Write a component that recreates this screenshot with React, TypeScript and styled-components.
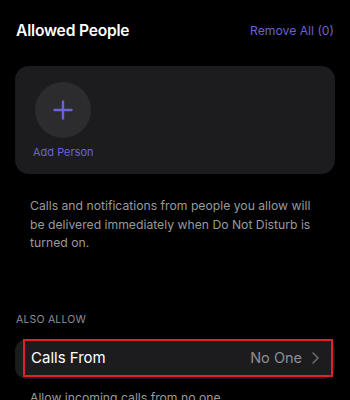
import React from 'react';
import styled, { createGlobalStyle } from 'styled-components';

const GlobalStyle = createGlobalStyle`
  html, body {
    margin: 0;
    padding: 0;
    background: #000000;
  }
  body {
    font-family: Inter, "Liberation Sans", sans-serif;
    -webkit-font-smoothing: antialiased;
  }
`;

const Screen = styled.div`
  width: 350px;
  height: 400px;
  overflow: hidden;
  background: #000000;
  color: #ffffff;
  box-sizing: border-box;
  padding: 18px 15px 0 15px;
`;

const Header = styled.div`
  display: flex;
  align-items: center;
  justify-content: space-between;
  padding: 0 1px;
  height: 24px;
`;

const Title = styled.h1`
  margin: 0;
  font-size: 15.6px;
  font-weight: 600;
  letter-spacing: -0.2px;
  color: #ffffff;
`;

const LinkButton = styled.button`
  background: none;
  border: none;
  padding: 0;
  font-family: inherit;
  font-size: 12.2px;
  color: #6a62d6;
  cursor: pointer;
`;

const Card = styled.div`
  margin-top: 24px;
  height: 108px;
  background: #1c1c1e;
  border-radius: 14px;
  box-sizing: border-box;
  padding: 16px 18px 0 18px;
`;

const AddPerson = styled.button`
  display: flex;
  flex-direction: column;
  align-items: center;
  gap: 7px;
  background: none;
  border: none;
  padding: 0;
  cursor: pointer;
  font-family: inherit;
`;

const AddCircle = styled.div`
  width: 56px;
  height: 56px;
  border-radius: 50%;
  background: #2c2c2e;
  display: flex;
  align-items: center;
  justify-content: center;
`;

const AddLabel = styled.span`
  font-size: 11px;
  color: #6a62d6;
`;

const Footnote = styled.p<{ $top?: number }>`
  margin: ${(p) => p.$top ?? 23}px 0 0 0;
  padding: 0 14px 0 15px;
  font-size: 12.2px;
  line-height: 18.5px;
  color: #9a9a9f;
`;

const SectionLabel = styled.div`
  margin-top: 60px;
  padding-left: 1px;
  font-size: 10.5px;
  letter-spacing: 0.2px;
  color: #8e8e93;
  text-transform: uppercase;
`;

const RowCard = styled.div`
  margin-top: 13px;
  background: #1c1c1e;
  border-radius: 12px;
  height: 40px;
  padding-left: 8px;
  display: flex;
`;

const Highlight = styled.div`
  flex: 1;
  margin-right: 2px;
  height: 38px;
  border: 2px solid #e0202a;
  box-sizing: border-box;
  display: flex;
  align-items: center;
  justify-content: space-between;
  padding: 0 12px 0 6px;
`;

const RowLabel = styled.span`
  font-size: 15px;
  color: #ffffff;
`;

const RowValue = styled.span`
  display: flex;
  align-items: center;
  gap: 10px;
  font-size: 14.5px;
  color: #8e8e93;
`;

const Plus = () => (
  <svg width="20" height="20" viewBox="0 0 20 20">
    <path d="M10 1.5v17M1.5 10h17" stroke="#6a62d6" strokeWidth="2.4" strokeLinecap="round" />
  </svg>
);

const Chevron = () => (
  <svg width="7" height="12" viewBox="0 0 7 12">
    <path d="M1 1l5 5-5 5" fill="none" stroke="#6a6a70" strokeWidth="1.6" strokeLinecap="round" strokeLinejoin="round" />
  </svg>
);

export default function App() {
  return (
    <>
      <GlobalStyle />
      <Screen>
        <Header>
          <Title>Allowed People</Title>
          <LinkButton>Remove All (0)</LinkButton>
        </Header>

        <Card>
          <AddPerson>
            <AddCircle>
              <Plus />
            </AddCircle>
            <AddLabel>Add Person</AddLabel>
          </AddPerson>
        </Card>

        <Footnote>
          Calls and notifications from people you allow will be delivered immediately when Do Not Disturb is
          turned on.
        </Footnote>

        <SectionLabel>Also Allow</SectionLabel>

        <RowCard>
          <Highlight>
            <RowLabel>Calls From</RowLabel>
            <RowValue>
              No One
              <Chevron />
            </RowValue>
          </Highlight>
        </RowCard>

        <Footnote $top={10}>Allow incoming calls from no one.</Footnote>
      </Screen>
    </>
  );
}
